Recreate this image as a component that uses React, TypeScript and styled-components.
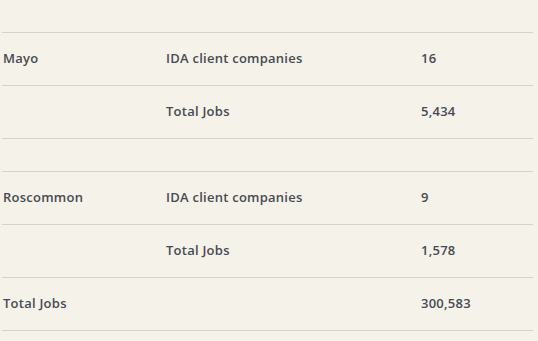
import * as React from "react";
import styled, { createGlobalStyle } from "styled-components";

const GlobalStyle = createGlobalStyle`
  html, body {
    margin: 0;
    padding: 0;
    background: #f5f2ea;
  }
`;

const Page = styled.div`
  width: 538px;
  height: 341px;
  overflow: hidden;
  background: #f5f2ea;
  padding: 0 5px 0 2px;
  box-sizing: border-box;
`;

const Table = styled.table`
  width: 100%;
  border-collapse: collapse;
  font-family: "Open Sans", "Liberation Sans", sans-serif;
  font-size: 13px;
  font-weight: 550;
  letter-spacing: 0.25px;
  color: #474b51;
`;

const Row = styled.tr<{ $height: number }>`
  height: ${p => p.$height}px;
  border-bottom: 1px solid #d7d2c2;
`;

const Cell = styled.td<{ $width?: number }>`
  padding: 0 0 2px 1px;
  vertical-align: middle;
  width: ${p => (p.$width ? `${p.$width}px` : "auto")};
`;

type Line = { county: string; label: string; value: string };

const rows: (Line | number)[] = [
  32,
  { county: "Mayo", label: "IDA client companies", value: "16" },
  { county: "", label: "Total Jobs", value: "5,434" },
  33,
  { county: "Roscommon", label: "IDA client companies", value: "9" },
  { county: "", label: "Total Jobs", value: "1,578" },
  { county: "Total Jobs", label: "", value: "300,583" },
];

export default function App() {
  return (
    <>
      <GlobalStyle />
      <Page>
        <Table>
          <tbody>
            {rows.map((r, i) =>
              typeof r === "number" ? (
                <Row key={i} $height={r}>
                  <Cell colSpan={3} />
                </Row>
              ) : (
                <Row key={i} $height={53}>
                  <Cell $width={162}>{r.county}</Cell>
                  <Cell $width={254}>{r.label}</Cell>
                  <Cell>{r.value}</Cell>
                </Row>
              )
            )}
          </tbody>
        </Table>
      </Page>
    </>
  );
}
